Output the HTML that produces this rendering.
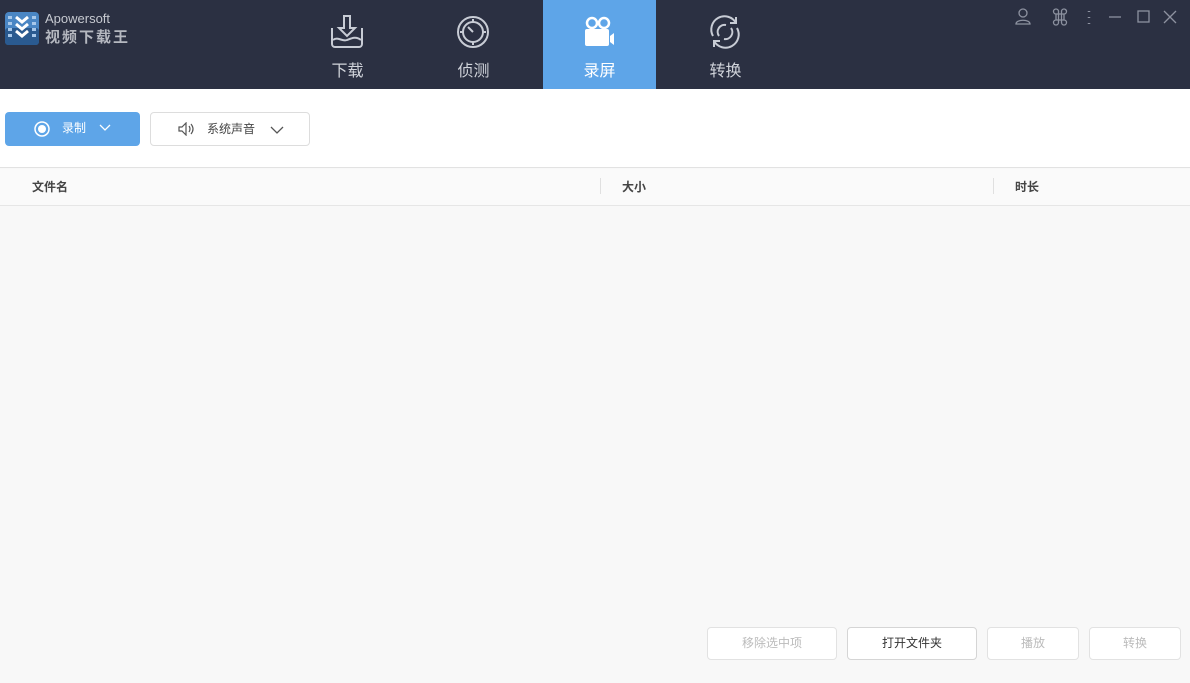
<!DOCTYPE html>
<html><head><meta charset="utf-8"><style>
*{margin:0;padding:0;box-sizing:border-box}
body{width:1190px;height:683px;overflow:hidden;background:#f8f8f8;font-family:"Liberation Sans","Noto Sans CJK SC",sans-serif;position:relative}
.top{position:absolute;left:0;top:0;width:1190px;height:89px;background:#2b3042}
.tab{position:absolute;top:0;width:113px;height:89px;color:#d0d3da;font-size:16px;text-align:center}
.tab span{position:absolute;left:0;right:0;top:57px}
.tab svg{position:absolute;left:39px;top:14px}
.bar{position:absolute;left:0;top:89px;width:1190px;height:79px;background:#fff;border-bottom:1px solid #e2e2e2}
.hdr{position:absolute;left:0;top:169px;width:1190px;height:37px;background:#fafafa;border-bottom:1px solid #e6e6e6;font-size:12px;font-weight:bold;color:#444}
.hdr div{position:absolute;top:9px}
.sep{position:absolute;top:10px;width:1px;height:16px;background:#e0e0e0}
.btn{position:absolute;top:627px;height:33px;border:1px solid #e2e2e2;border-radius:4px;background:#fff;font-size:12px;color:#bbb;text-align:center;line-height:30px}
</style></head><body>
<div class="top">
 <svg style="position:absolute;left:5px;top:12px" width="34" height="33" viewBox="0 0 34 33"><rect width="34" height="33" rx="4" fill="#4a86c4"/><rect x="0" y="16" width="34" height="17" rx="3" fill="#2a5a90"/><g fill="#a8c8ea"><rect x="3" y="4" width="4" height="3"/><rect x="3" y="10" width="4" height="3"/><rect x="3" y="16" width="4" height="3"/><rect x="3" y="22" width="4" height="3"/><rect x="27" y="4" width="4" height="3"/><rect x="27" y="10" width="4" height="3"/><rect x="27" y="16" width="4" height="3"/><rect x="27" y="22" width="4" height="3"/></g><path d="M11 5l6 5 6-5M11 12l6 5 6-5M11 19l6 5 6-5" stroke="#fff" stroke-width="3" fill="none"/></svg>
 <div style="position:absolute;left:45px;top:11px;color:#c6c9d0;font-size:13px">Apowersoft</div>
 <div style="position:absolute;left:45px;top:26px;color:#b5b8c0;font-size:15px;font-weight:bold;letter-spacing:2px">视频下载王</div>
 <div class="tab" style="left:291px"><svg width="34" height="36" viewBox="0 0 34 36" fill="none" stroke="#c8ccd5" stroke-width="2"><path d="M14 2h6v12h5l-8 8-8-8h5z"/><path d="M2 14v16a3 3 0 0 0 3 3h24a3 3 0 0 0 3-3V14"/><path d="M3 26c5-4 9 2 14 0s9-4 14 0"/></svg><span>下载</span></div>
 <div class="tab" style="left:417px"><svg width="34" height="36" viewBox="0 0 34 36" fill="none" stroke="#c8ccd5" stroke-width="2"><circle cx="17" cy="18" r="15"/><circle cx="17" cy="18" r="10"/><path d="M17 5v4M17 27v4M4 18h4M26 18h4M17 18l-5-5"/></svg><span>侦测</span></div>
 <div class="tab" style="left:543px;background:#5ea5e8;color:#fff"><svg width="34" height="36" viewBox="0 0 34 36"><g fill="none" stroke="#fff" stroke-width="2.5"><circle cx="10" cy="9" r="5"/><circle cx="22" cy="9" r="5"/></g><rect x="3" y="15" width="24" height="17" rx="2" fill="#fff"/><path d="M28 22l4-3v12l-4-3z" fill="#fff"/></svg><span>录屏</span></div>
 <div class="tab" style="left:669px"><svg width="34" height="36" viewBox="0 0 34 36" fill="none" stroke="#c8ccd5" stroke-width="2"><path d="M5 22A13 13 0 0 1 28 9"/><path d="M29 14A13 13 0 0 1 6 27"/><path d="M28 3v6h-6M6 33v-6h6"/><path d="M11 22a7 7 0 0 1 7-11M23 14a7 7 0 0 1-7 11"/></svg><span>转换</span></div>
 <svg style="position:absolute;left:1010px;top:7px" width="170" height="20" viewBox="0 0 170 20" fill="none" stroke="#8d92a0" stroke-width="1.3"><circle cx="13" cy="6" r="4"/><path d="M6 17c0-5 14-5 14 0z"/><path d="M46 7h8v6h-8zM46 7a2.5 2.5 0 1 1 2.5-2.5v11a2.5 2.5 0 1 1-2.5-2.5h8a2.5 2.5 0 1 1-2.5 2.5v-11a2.5 2.5 0 1 1 2.5 2.5"/><path d="M79 4v1M79 10v1M79 16v1" stroke-width="2.5"/><path d="M99 10h12"/><rect x="128" y="4" width="11" height="11"/><path d="M154 4l12 12M166 4l-12 12"/></svg>
</div>
<div class="bar">
 <div style="position:absolute;left:5px;top:23px;width:135px;height:34px;background:#5ea5e8;border-radius:4px;color:#fff;font-size:12px">
  <svg style="position:absolute;left:28px;top:8px" width="18" height="18"><circle cx="9" cy="9" r="7" fill="none" stroke="#fff" stroke-width="1.5"/><circle cx="9" cy="9" r="4" fill="#fff"/></svg>
  <span style="position:absolute;left:57px;top:7px">录制</span>
  <svg style="position:absolute;left:94px;top:12px" width="12" height="8"><path d="M1 1l5 5 5-5" stroke="#fff" stroke-width="1.3" fill="none"/></svg>
 </div>
 <div style="position:absolute;left:150px;top:23px;width:160px;height:34px;border:1px solid #ddd;border-radius:4px;background:#fff;font-size:12px;color:#444">
  <svg style="position:absolute;left:27px;top:9px" width="18" height="14" fill="none" stroke="#555" stroke-width="1.2"><path d="M1 5h3l4-4v12l-4-4H1z"/><path d="M11 4q2 3 0 6M13 2q4 5 0 10"/></svg>
  <span style="position:absolute;left:56px;top:7px">系统声音</span>
  <svg style="position:absolute;left:119px;top:13px" width="14" height="8"><path d="M1 1l6 6 6-6" stroke="#555" stroke-width="1.3" fill="none"/></svg>
 </div>
</div>
<div class="hdr"><div style="left:32px">文件名</div><div class="sep" style="left:600px"></div><div style="left:622px">大小</div><div class="sep" style="left:993px"></div><div style="left:1015px">时长</div></div>
<div class="btn" style="left:707px;width:130px">移除选中项</div>
<div class="btn" style="left:847px;width:130px;color:#333;border-color:#d5d5d5">打开文件夹</div>
<div class="btn" style="left:987px;width:92px">播放</div>
<div class="btn" style="left:1089px;width:92px">转换</div>
</body></html>
